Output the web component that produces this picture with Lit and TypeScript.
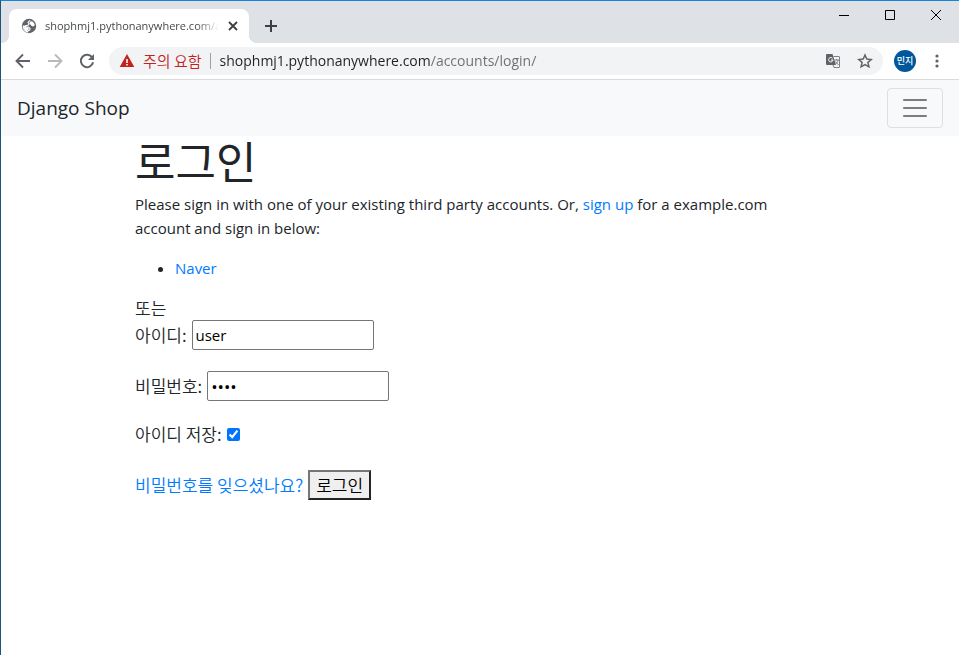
import { LitElement, html, css } from "lit";
import { customElement } from "lit/decorators.js";

const latin = css`"Open Sans", "Noto Sans", "Noto Sans CJK KR", sans-serif`;

@customElement("browser-tabs")
class BrowserTabs extends LitElement {
  static styles = css`
    :host { display: flex; justify-content: space-between; height: 42px; background: #dee1e6; font-family: ${latin}; }
    button { border: 0; padding: 0; background: none; display: grid; place-items: center; color: #3c4043; }
    svg { display: block; }
    .left { display: flex; align-items: flex-end; }
    .tab {
      position: relative; display: flex; align-items: center; box-sizing: border-box;
      width: 240px; height: 34px; margin-left: 8px; padding: 0 8px 0 12px;
      background: #fff; border-radius: 8px 8px 0 0;
    }
    .tab::before, .tab::after { content: ""; position: absolute; bottom: 0; width: 8px; height: 8px; }
    .tab::before { left: -8px; background: radial-gradient(circle at 0 0, transparent 8px, #fff 8px); }
    .tab::after { right: -8px; background: radial-gradient(circle at 100% 0, transparent 8px, #fff 8px); }
    .title {
      flex: 1; margin: 0 6px 0 8px; overflow: hidden; white-space: nowrap; font-size: 11px; line-height: 18px; color: #45494d;
      mask-image: linear-gradient(to right, #000 152px, transparent 174px);
    }
    .close { width: 16px; height: 16px; }
    .add { width: 28px; height: 34px; margin-left: 8px; }
    .window { display: flex; height: 28px; }
    .window button { width: 46px; color: #000; }
  `;
  render() {
    return html`
      <div class="left">
        <div class="tab">
          <svg width="16" height="16" viewBox="0 0 16 16">
            <circle cx="8" cy="8" r="7.2" fill="#5f6368" />
            <path d="M9.200 2.300 7 4.300l1 1.500-1 1.400-2.300.4-.6 1.300 3.400.2 1.600 1.500-.4 1.500-1.700.5-.3 1.300C3.900 13.500 2 11 2.200 8.200l1.700.2" fill="none" stroke="#fff" stroke-width="1.100" />
            <path d="M9.300 3.500l1.700-.3c1.500.9 2.600 2.400 2.800 4.100l-1.600 1.200-1.700-.4-.6-1.400-1.500-.5.1-1.300z" fill="#fff" />
            <path d="M2.500 9.300h3.700l1.600 1.200-.4 1.500-1.400.8-.4.700C4 12.700 2.800 11.200 2.500 9.300z" fill="#fff" />
          </svg>
          <span class="title">shophmj1.pythonanywhere.com/a</span>
          <button class="close" aria-label="Close tab">
            <svg width="16" height="16" viewBox="0 0 16 16"><path d="m4 4 8 8m0-8-8 8" stroke="currentColor" stroke-width="1.800" /></svg>
          </button>
        </div>
        <button class="add" aria-label="New tab">
          <svg width="14" height="14" viewBox="0 0 14 14"><path d="M7 1v12M1 7h12" stroke="currentColor" stroke-width="2" /></svg>
        </button>
      </div>
      <div class="window">
        <button aria-label="Minimize"><svg width="10" height="10"><path d="M0 5.500h10" stroke="currentColor" /></svg></button>
        <button aria-label="Maximize"><svg width="10" height="10"><path d="M.5.5h9v9h-9z" fill="none" stroke="currentColor" /></svg></button>
        <button aria-label="Close"><svg width="10" height="10"><path d="m0 0 10 10M10 0 0 10" stroke="currentColor" /></svg></button>
      </div>`;
  }
}

@customElement("browser-toolbar")
class BrowserToolbar extends LitElement {
  static styles = css`
    :host { display: flex; align-items: center; height: 36px; padding: 0 6px; background: #fff; border-bottom: 1px solid #d9dadc; font-family: ${latin}; }
    button { border: 0; padding: 0; background: none; display: grid; place-items: center; width: 32px; height: 28px; flex: none; color: #5f6368; }
    svg { display: block; }
    .off { color: #bababc; }
    .bar { flex: 1; min-width: 0; display: flex; align-items: center; height: 28px; margin: 0 6px; padding: 0 2px 0 10px; border-radius: 14px; background: #f1f3f4; }
    .warn { color: #c5221f; font: 15px/20px "Noto Sans CJK KR", sans-serif; font-weight: 350; margin: 0 8px; white-space: nowrap; }
    .rule { width: 1px; height: 16px; margin-right: 9px; background: #9aa0a6; }
    .address {
      flex: 1; min-width: 0; border: 0; padding: 0; outline: 0; font: 14px/20px ${latin};
      color: transparent; background: linear-gradient(to right, #202124 211px, #6b6f73 211px); background-clip: text;
    }
    .user { width: 22px; height: 22px; margin: 0 5px; border-radius: 50%; background: #01579b; color: #fff; font: 500 9px/22px "Noto Sans CJK KR", sans-serif; }
  `;
  render() {
    return html`
      <button aria-label="Back"><svg width="16" height="16" viewBox="0 0 16 16"><path d="M15 8H2M8 1.500 1.500 8 8 14.500" fill="none" stroke="currentColor" stroke-width="1.900" /></svg></button>
      <button class="off" aria-label="Forward" disabled><svg width="16" height="16" viewBox="0 0 16 16"><path d="M1 8h13M8 1.500 14.500 8 8 14.500" fill="none" stroke="currentColor" stroke-width="1.900" /></svg></button>
      <button aria-label="Reload"><svg width="16" height="16" viewBox="0 0 16 16"><path d="M13.300 4.600A6.200 6.200 0 1 0 14.100 9.300" fill="none" stroke="currentColor" stroke-width="2" /><path d="M15 1v6H9z" fill="currentColor" /></svg></button>
      <div class="bar">
        <svg width="16" height="16" viewBox="0 0 16 16"><path d="M8 1 15.300 14H.7z" fill="#c5221f" /><path d="M7.200 6h1.600v4H7.200zM7.200 11h1.600v1.600H7.200z" fill="#fff" /></svg>
        <span class="warn">주의 요함</span>
        <span class="rule"></span>
        <input class="address" aria-label="Address" value="shophmj1.pythonanywhere.com/accounts/login/" />
        <button aria-label="Translate">
          <svg width="16" height="16" viewBox="0 0 16 16">
            <path d="M2 1h5.500l3.500 11H2a1 1 0 0 1-1-1V2a1 1 0 0 1 1-1z" fill="#5f6368" />
            <path d="M8.500 3.500H14q.5 0 .5.500v10q0 .5-.5.500H9L8 12" fill="none" stroke="#7d8084" />
            <path d="M7.500 5.300A2.200 2.200 0 1 0 8 7H6" fill="none" stroke="#fff" />
            <path d="M9.500 7h4.500M11.500 6v1M13 7c-.3 2-1.500 3.500-3 4.500M10.500 8.500l3 3.500" fill="none" stroke="#7d8084" />
          </svg>
        </button>
        <button aria-label="Bookmark"><svg width="16" height="16" viewBox="0 0 16 16"><path d="m8 2 1.800 4.100 4.500.4-3.400 2.900 1 4.400L8 11.500l-3.900 2.300 1-4.400-3.400-2.900 4.500-.4z" fill="none" stroke="currentColor" stroke-width="1.500" /></svg></button>
      </div>
      <button class="user" aria-label="Profile">민지</button>
      <button aria-label="Menu"><svg width="4" height="14" viewBox="0 0 4 14" fill="currentColor"><circle cx="2" cy="2" r="1.600" /><circle cx="2" cy="7" r="1.600" /><circle cx="2" cy="12" r="1.600" /></svg></button>`;
  }
}

@customElement("shop-login")
class ShopLogin extends LitElement {
  static styles = css`
    :host { display: block; color: #212529; font: 15px/24px ${latin}; }
    a { color: #007bff; text-decoration: none; }
    .nav { display: flex; align-items: center; justify-content: space-between; padding: 8px 16px; background: #f8f9fa; }
    .brand { color: #212529; font-size: 19px; line-height: 30px; }
    .toggle { width: 56px; height: 40px; padding: 0; display: grid; place-items: center; background: none; border: 1px solid #dedfe0; border-radius: 4px; }
    .page { box-sizing: border-box; max-width: 720px; margin: 0 auto; padding: 0 15px; }
    .ko, .heading { font-family: "Noto Sans CJK KR", sans-serif; font-weight: 350; }
    .ko { font-size: 17px; }
    .heading { margin: 0 0 8px; font-size: 44px; line-height: 48px; font-weight: 400; }
    p { margin: 0 0 16px; }
    ul { margin: 0 0 16px; padding-left: 40px; }
    form { display: flex; flex-direction: column; gap: 21px; }
    .row { display: flex; align-items: center; gap: 5px; }
    .save { height: 24px; margin-bottom: 3px; }
    .field { box-sizing: border-box; width: 182px; height: 30px; padding: 1px 3px; border: 1px solid #767676; border-radius: 2px; font: 15px/24px ${latin}; color: #000; background: #fff; }
    .field[type="password"] { font-size: 17px; }
    .check { width: 13px; height: 13px; margin: 0; accent-color: #0075ff; }
    .submit { box-sizing: border-box; height: 30px; padding: 0 6px; border: 2px solid; border-color: #767676 #212529 #212529 #767676; background: #efefef; color: #000; line-height: 24px; }
  `;
  render() {
    return html`
      <nav class="nav">
        <a class="brand" href="#">Django Shop</a>
        <button class="toggle" aria-label="Toggle navigation">
          <svg width="30" height="30" viewBox="0 0 30 30"><path stroke="rgba(0,0,0,0.5)" stroke-linecap="round" stroke-miterlimit="10" stroke-width="2" d="M4 7h22M4 15h22M4 23h22" /></svg>
        </button>
      </nav>
      <main class="page">
        <h1 class="heading">로그인</h1>
        <p>Please sign in with one of your existing third party accounts. Or, <a href="#">sign up</a> for a example.com account and sign in below:</p>
        <ul><li><a href="#">Naver</a></li></ul>
        <div class="ko">또는</div>
        <form>
          <div class="row"><label class="ko" for="user">아이디:</label><input class="field" id="user" value="user" /></div>
          <div class="row"><label class="ko" for="pass">비밀번호:</label><input class="field" id="pass" type="password" value="user" /></div>
          <div class="row save"><label class="ko" for="save">아이디 저장:</label><input class="check" id="save" type="checkbox" checked /></div>
          <div class="row"><a class="ko" href="#">비밀번호를 잊으셨나요?</a><button class="submit ko" type="button">로그인</button></div>
        </form>
      </main>`;
  }
}

@customElement("app-root")
class AppRoot extends LitElement {
  static styles = css`
    :host { display: block; box-sizing: border-box; min-height: 100vh; background: #fff; border-top: 1px solid #1883d7; border-left: 1px solid #1b557a; }
  `;
  render() {
    return html`<browser-tabs></browser-tabs><browser-toolbar></browser-toolbar><shop-login></shop-login>`;
  }
}
